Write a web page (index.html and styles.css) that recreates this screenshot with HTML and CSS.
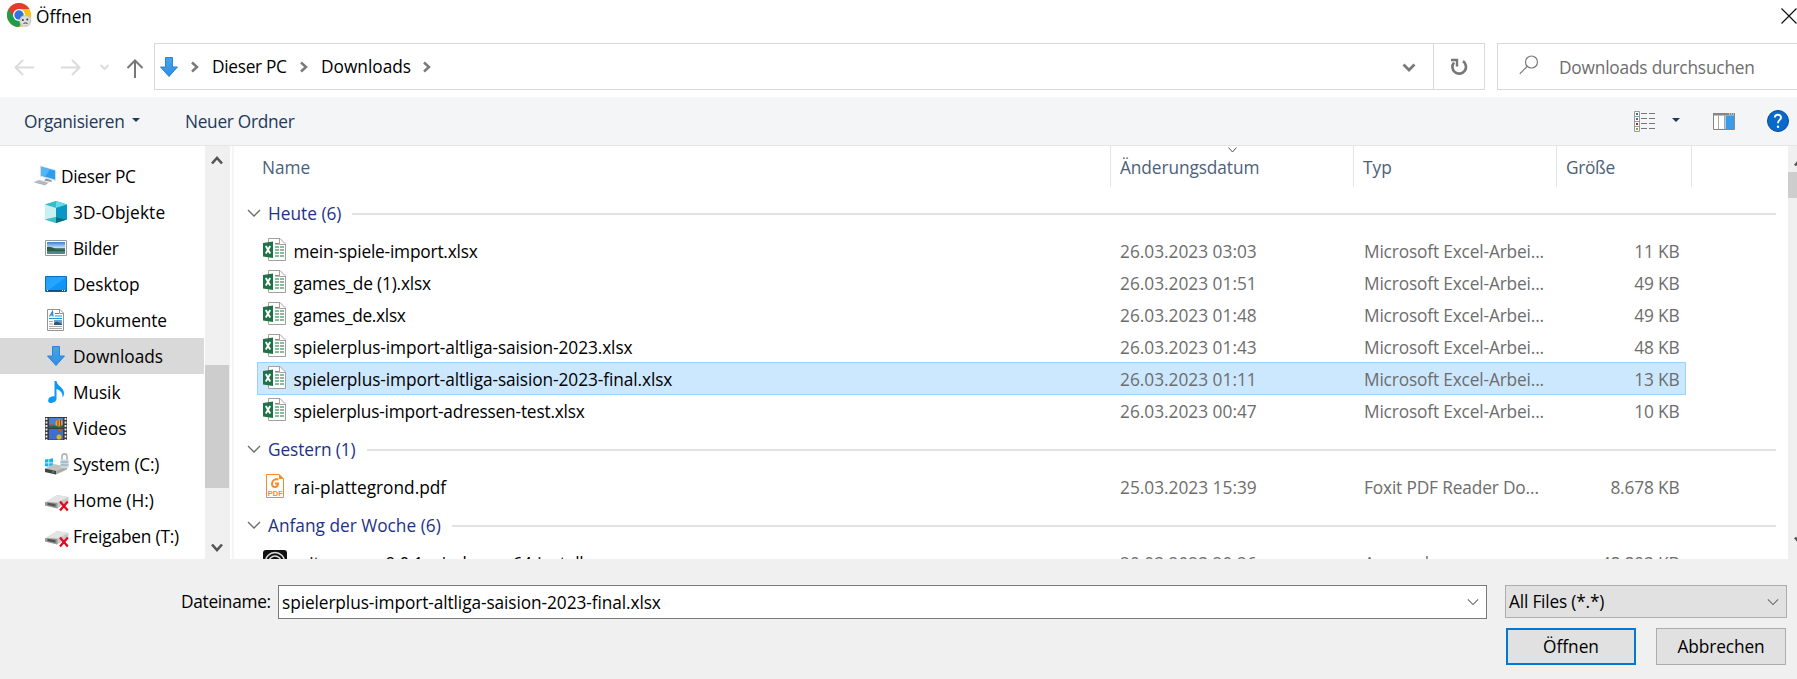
FILE: index.html
```html
<!DOCTYPE html>
<html lang="de">
<head>
<meta charset="utf-8">
<title>Öffnen</title>
<link rel="stylesheet" href="styles.css">
</head>
<body>
<svg class="defs" aria-hidden="true">
  <defs>
    <linearGradient id="blue" x1="0" y1="0" x2="0" y2="1"><stop offset="0" stop-color="#4aa3ea"/><stop offset="1" stop-color="#2e8fe4"/></linearGradient>
    <linearGradient id="desk" x1="0" y1="0" x2="1" y2="1"><stop offset="0" stop-color="#1ba0fb"/><stop offset=".5" stop-color="#2aa5fc"/><stop offset=".52" stop-color="#0f98f8"/><stop offset="1" stop-color="#0a93f5"/></linearGradient>
    <linearGradient id="sky" x1="0" y1="0" x2="0" y2="1"><stop offset="0" stop-color="#3f7fd6"/><stop offset=".5" stop-color="#cfe4f5"/><stop offset=".55" stop-color="#3b6a63"/><stop offset="1" stop-color="#4f8fa8"/></linearGradient>
  </defs>
  <symbol id="excel" viewBox="0 0 24 24">
    <path d="M5.5 .5H17l5.500 5.500V22.500H5.500Z" fill="#fff" stroke="#a0a0a0"/>
    <path d="M16.500 .5V6.500H22.500" fill="none" stroke="#a0a0a0"/>
    <path d="M12 5h4v1.500h-4zM12 8h4v2h-4zM17 8h4v2h-4zM12 11h4v2h-4zM17 11h4v2h-4zM12 14h4v2h-4zM17 14h4v2h-4zM12 17h4v2h-4zM17 17h4v2h-4z" fill="#85bd9f"/>
    <path d="M12 5h4v1.200h-4z" fill="#888"/>
    <path d="M0 5 10 3.500V20L0 18.500Z" fill="#1f7246"/>
    <path d="M2.800 8 7.200 15.500M7.200 8 2.800 15.500" stroke="#fff" stroke-width="1.900"/>
  </symbol>
  <symbol id="down" viewBox="0 0 20 22"><path d="M6.500 1.500h7v9.500h5L10 20.500 1.500 11h5z" fill="url(#blue)" stroke="#2b84d4" stroke-width="1"/></symbol>
  <symbol id="drive" viewBox="0 0 24 20">
    <path d="M0 10.500 12 3 23.500 5v4.500L12 16.500 0 13.500z" fill="#c9c9c9"/>
    <path d="M1 9.500 12 3 23 5 12.500 10.500z" fill="#e4e4e4"/>
    <path d="M0 10 12.500 11V16.500L0 13.500z" fill="#9a9a9a"/>
    <path d="M2.500 10.800 10.500 12V14.800L2.500 13z" fill="#555"/>
    <path d="M15 9.500 22.800 18.500M22.800 9.500 15 18.500" stroke="#e00b1c" stroke-width="2.300"/>
  </symbol>
  <symbol id="chev" viewBox="0 0 14 8"><path d="M1 1 7 7 13 1" fill="none" stroke="#6a6a6a" stroke-width="1.300"/></symbol>
</svg>

<div class="dialog">
  <header class="title">
    <svg width="25" height="25" viewBox="0 0 25 25">
      <circle cx="12" cy="12" r="12" fill="#fbc116"/>
      <path d="M12 12 1.600 6A12 12 0 0 0 12 24L17 15Z" fill="#1f9d49"/>
      <path d="M12 6H22.400A12 12 0 0 0 1.600 6L7 14.500Z" fill="#e33b2e"/>
      <circle cx="12" cy="12" r="6" fill="#fff"/><circle cx="12" cy="12" r="4.700" fill="#2f74e0"/>
      <circle cx="18.300" cy="18" r="6" fill="#c9c9c9"/><circle cx="18.300" cy="18" r="4.800" fill="#dedede"/>
      <circle cx="15.800" cy="17" r="1" fill="#333"/><circle cx="20.300" cy="16.500" r="1" fill="#333"/><path d="M16.500 20.500Q18.500 19 20.500 20.500" fill="none" stroke="#333"/>
    </svg>
    <span class="t">Öffnen</span>
    <svg class="close" width="16" height="16" viewBox="0 0 16 16"><path d="M.5 .5 15.500 15.500M15.500 .5 .5 15.500" stroke="#111" stroke-width="1.200"/></svg>
  </header>

  <nav class="nav">
    <svg class="arrows" width="154" height="47" viewBox="0 0 154 47" fill="none">
      <g stroke="#dcdcdc" stroke-width="2"><path d="M34 24.500H16M23 17 15.500 24.500 23 32M61 24.500H79M72 17 79.500 24.500 72 32"/><path d="M100.500 22 104.500 26 108.500 22"/></g>
      <path d="M135 35V18M127.500 25 135 17.500 142.500 25" stroke="#777" stroke-width="2"/>
    </svg>
    <div class="address">
      <svg class="adown" width="20" height="22"><use href="#down"/></svg>
      <svg class="sep" width="8" height="12" viewBox="0 0 8 12"><path d="M1 1.500 6 6 1 10.500" fill="none" stroke="#7a7a7a" stroke-width="2.500"/></svg>
      <span class="t pc l3">Dieser PC</span>
      <svg class="sep" width="8" height="12" viewBox="0 0 8 12"><path d="M1 1.500 6 6 1 10.500" fill="none" stroke="#7a7a7a" stroke-width="2.500"/></svg>
      <span class="t dl">Downloads</span>
      <svg class="sep" width="8" height="12" viewBox="0 0 8 12"><path d="M1 1.500 6 6 1 10.500" fill="none" stroke="#7a7a7a" stroke-width="2.500"/></svg>
      <svg class="drop" width="14" height="10" viewBox="0 0 14 10"><path d="M1.500 1.500 7 7 12.500 1.500" fill="none" stroke="#7a7a7a" stroke-width="2.800"/></svg>
      <div class="refresh"><svg width="18" height="18" viewBox="0 0 18 18"><path d="M13 3.200A6.800 6.800 0 1 1 4 4.500" fill="none" stroke="#777" stroke-width="2.700"/><path d="M1 2H7V8.500" fill="none" stroke="#777" stroke-width="2.400"/></svg></div>
    </div>
    <div class="search">
      <svg width="20" height="20" viewBox="0 0 20 20" fill="none" stroke="#777" stroke-width="1.200"><circle cx="12.500" cy="7" r="6"/><path d="M8 11.500 .8 18.800"/></svg>
      <span class="t l2">Downloads durchsuchen</span>
    </div>
  </nav>

  <div class="toolbar">
    <span class="t org l3">Organisieren</span><i class="tri"></i><span class="t new l3">Neuer Ordner</span>
    <svg class="view" width="22" height="21" viewBox="0 0 22 21">
      <path d="M.5 .5h5v20h-5zM.5 5.500h5M.5 10.500h5M.5 15.500h5" fill="#fff" stroke="#999"/>
      <path d="M7 2.500h6M15 2.500h6M7 7.500h6M15 7.500h6M7 12.500h6M15 12.500h6M7 17.500h6M15 17.500h6" stroke="#777"/>
      <path d="M2 2h2v2H2z" fill="#3b6e8f"/><path d="M2 7h2v2H2z" fill="#4a67a8"/><path d="M2 12h2v2H2z" fill="#b51e1e"/><path d="M2 17h2v2H2z" fill="#7aa05a"/>
    </svg>
    <i class="tri two"></i>
    <svg class="pane" width="22" height="17" viewBox="0 0 22 17"><path d="M.5 .5h21v16H.5z" fill="#fff" stroke="#868686"/><path d="M0 0h22v2.500H0z" fill="#868686"/><path d="M5.500 2v14M11.500 2v14" stroke="#aaa"/><path d="M12.500 2.500H21V16h-8.500z" fill="#3c9be6"/><path d="M16 1h1M18 1h1M20 1h1" stroke="#fff"/></svg>
    <svg class="help" width="22" height="22" viewBox="0 0 22 22"><circle cx="11" cy="11" r="10.500" fill="#0a69cc" stroke="#0b4a94"/><path d="M7.800 7.500C8 3.800 14.200 4 14 7.600 13.900 10 11 10 11 13.300" fill="none" stroke="#fff" stroke-width="1.900"/><circle cx="11" cy="16.700" r="1.200" fill="#fff"/></svg>
  </div>

  <main class="body">
    <aside class="side">
      <div class="item root"><svg width="24" height="22" viewBox="0 0 24 22"><path d="M7 .5 23 5V16L7 11.500z" fill="#d5dde4"/><path d="M8 1.800 22 5.600V14.500L8 10.600z" fill="#2b9df0"/><path d="M8 1.800 17 4.300 12 11.700 8 10.600z" fill="#55b4f6"/><path d="M13 13.500 18 15 19 17 11 15.500z" fill="#8b959e"/><path d="M.5 17 6 14.800 16 17.500 12 20.500z" fill="#c4cad0"/><path d="M2 17.200 12.500 19.700M4.500 16.200 14 18.500" stroke="#9aa3aa" stroke-width=".7"/></svg><span class="t l3">Dieser PC</span></div>
      <div class="item"><svg width="22" height="22" viewBox="0 0 22 22"><path d="M0 3.500 11 0 22 3.500V18.500L11 22 0 18.500z" fill="#3fd0dc"/><path d="M0 3.500 11 0 22 3.500 11 7z" fill="#37bcc8"/><path d="M11 0 22 3.500 11 7z" fill="#64dbe4"/><path d="M0 3.500 11 7V16L0 18.500z" fill="#c9f1f2"/><path d="M11 7 22 3.500V18.500L11 16z" fill="#0798c6"/><path d="M0 18.500 11 16V22z" fill="#3cc1cb"/><path d="M11 16 22 18.500 11 22z" fill="#04707f"/></svg><span class="t w1">3D-Objekte</span></div>
      <div class="item"><svg width="22" height="16" viewBox="0 0 22 16"><path d="M.5 .5h21v15H.5z" fill="#fff" stroke="#9a9a9a"/><path d="M2 2h18v12H2z" fill="url(#sky)"/><path d="M2 7Q7 6 11 9.500L20 10V11H2z" fill="#2e5b46"/></svg><span class="t l3">Bilder</span></div>
      <div class="item"><svg width="22" height="16" viewBox="0 0 22 16"><path d="M.5 .5h21v15H.5z" fill="url(#desk)" stroke="#0b6fc0"/><path d="M1 14h20v1.500H1z" fill="#0d4f8c"/><path d="M2 14.500h1M17 14.500h1M19 14.500h1" stroke="#fff"/></svg><span class="t">Desktop</span></div>
      <div class="item"><svg width="22" height="22" viewBox="0 0 22 22"><path d="M2.500 .5H15L18.500 4V21.500h-16z" fill="#fff" stroke="#949494"/><path d="M14.500 .5V4.500H18.500" fill="none" stroke="#949494"/><path d="M4.500 7.500 7.500 2.500 8 7.500M5.500 6h2.500" fill="none" stroke="#1b87c9" stroke-width="1.200"/><path d="M10 4.500h4M10 7h7M4 9.500h13" stroke="#2795d8" stroke-width="1.200"/><path d="M4 12.500h4M4 15h4M4 17.500h13M4 19.500h13" stroke="#aaa"/><path d="M9 11h8v5H9z" fill="#6ba0cf"/><path d="M9 14 12 12.500 17 15V16H9z" fill="#2e5673"/></svg><span class="t l1">Dokumente</span></div>
      <div class="item on"><svg width="22" height="22"><use href="#down"/></svg><span class="t">Downloads</span></div>
      <div class="item"><svg width="22" height="22" viewBox="0 0 22 22"><path d="M9.500 0H11.500C12 5 19 6 19 12.500Q19 15 17.500 16.500 18 10 11.500 8V17.500C11.500 21 7.500 22 5.500 22S2.500 20 3.500 18 7 15 9.500 15.500z" fill="#0d99f5"/></svg><span class="t l1">Musik</span></div>
      <div class="item"><svg width="22" height="23" viewBox="0 0 22 23"><path d="M0 0h22v23H0z" fill="#3c3c3c"/><path d="M1.500 1v22M20.500 1v22" stroke="#eee" stroke-width="1.800" stroke-dasharray="2 1.500"/><path d="M4 1h14v10H4z" fill="#4c80d4"/><path d="M4 12h14v10.500H4z" fill="#3d70ca"/><path d="M4 8.500Q7 6.500 10 9L18 8V11H4z" fill="#286443"/><circle cx="14" cy="6" r="3.500" fill="#d8aa25"/><path d="M12.500 3h1v6h-1zM15 3h1v6h-1z" fill="#b52b2b"/><path d="M13 12h4l-1.500 3h-2z" fill="#b85a23"/><circle cx="14" cy="20" r="2.500" fill="#e2b123"/><circle cx="6.500" cy="8" r="1.300" fill="#d83d66"/></svg><span class="t">Videos</span></div>
      <div class="item"><svg width="24" height="22" viewBox="0 0 24 22"><path d="M0 6.500 3.500 6V9.500H0zM4.200 5.900 8 5.300V9.500H4.200zM0 10.200H3.500V13.600L0 13.200zM4.200 10.200H8V14.200L4.200 13.700z" fill="#12b5ee"/><path d="M0 15.500 9 11 22 14 11 18.500V21.500L0 19z" fill="#c2c2c2"/><path d="M11 18 22 13.500V16.500L11 21.500z" fill="#aaa"/><path d="M0 15.500 11 18V21.500L0 19z" fill="#444"/><path d="M7 19h2" stroke="#35d435"/><path d="M17 7V3.500C17 0 22 0 22 3.500V7" fill="none" stroke="#aab4bb" stroke-width="1.600"/><path d="M15.500 6.500h8v8l-4 1-4-1z" fill="#cdd9e1"/><path d="M15.500 9h8M15.500 12h8" stroke="#86a2b3"/></svg><span class="t l2">System (C:)</span></div>
      <div class="item net"><svg width="24" height="20"><use href="#drive"/></svg><span class="t">Home (H:)</span></div>
      <div class="item net"><svg width="24" height="20"><use href="#drive"/></svg><span class="t l2">Freigaben (T:)</span></div>
    </aside>
    <div class="sbar">
      <svg width="12" height="9" viewBox="0 0 12 9"><path d="M1 7.500 6 2 11 7.500" fill="none" stroke="#555" stroke-width="2.600"/></svg>
      <div class="thumb"></div>
      <svg width="12" height="9" viewBox="0 0 12 9"><path d="M1 1.500 6 7 11 1.500" fill="none" stroke="#555" stroke-width="2.600"/></svg>
    </div>
    <section class="files">
      <div class="cols">
        <span class="t">Name</span><span class="t l1">Änderungsdatum<svg class="sort" width="9" height="6" viewBox="0 0 9 6"><path d="M.5 .5 4.500 5 8.500 .5" fill="none" stroke="#555"/></svg></span><span class="t">Typ</span><span class="t l3">Größe</span><span></span>
      </div>
      <div class="group"><svg width="14" height="8"><use href="#chev"/></svg><span class="t">Heute (6)</span><hr></div>
      <div class="row"><svg width="24" height="24"><use href="#excel"/></svg><span class="t n l2">mein-spiele-import.xlsx</span><span class="t d">26.03.2023 03:03</span><span class="t k">Microsoft Excel-Arbei...</span><span class="t s">11 KB</span></div>
      <div class="row"><svg width="24" height="24"><use href="#excel"/></svg><span class="t n l2">games_de (1).xlsx</span><span class="t d">26.03.2023 01:51</span><span class="t k">Microsoft Excel-Arbei...</span><span class="t s">49 KB</span></div>
      <div class="row"><svg width="24" height="24"><use href="#excel"/></svg><span class="t n l3">games_de.xlsx</span><span class="t d">26.03.2023 01:48</span><span class="t k">Microsoft Excel-Arbei...</span><span class="t s">49 KB</span></div>
      <div class="row"><svg width="24" height="24"><use href="#excel"/></svg><span class="t n l1">spielerplus-import-altliga-saision-2023.xlsx</span><span class="t d">26.03.2023 01:43</span><span class="t k">Microsoft Excel-Arbei...</span><span class="t s">48 KB</span></div>
      <div class="row sel"><svg width="24" height="24"><use href="#excel"/></svg><span class="t n l1">spielerplus-import-altliga-saision-2023-final.xlsx</span><span class="t d">26.03.2023 01:11</span><span class="t k">Microsoft Excel-Arbei...</span><span class="t s">13 KB</span></div>
      <div class="row"><svg width="24" height="24"><use href="#excel"/></svg><span class="t n l2">spielerplus-import-adressen-test.xlsx</span><span class="t d">26.03.2023 00:47</span><span class="t k">Microsoft Excel-Arbei...</span><span class="t s">10 KB</span></div>
      <div class="group"><svg width="14" height="8"><use href="#chev"/></svg><span class="t l1">Gestern (1)</span><hr></div>
      <div class="row"><svg width="24" height="24" viewBox="0 0 24 24"><path d="M3.500 .5H16L20.500 5V23.500h-17z" fill="#fff" stroke="#f28c28"/><path d="M16 0 21 5H16z" fill="#f28c28"/><path d="M15.500 5.500Q9.500 4.500 9 9.500 9 13.500 12.500 13 15 12.500 15 9.500H12" fill="none" stroke="#f28c28" stroke-width="2"/><text class="pdf" x="4.800" y="21.800">PDF</text></svg><span class="t n">rai-plattegrond.pdf</span><span class="t d">25.03.2023 15:39</span><span class="t k">Foxit PDF Reader Do...</span><span class="t s">8.678 KB</span></div>
      <div class="group"><svg width="14" height="8"><use href="#chev"/></svg><span class="t">Anfang der Woche (6)</span><hr></div>
      <div class="row"><svg width="24" height="24" viewBox="0 0 24 24"><rect width="24" height="24" rx="3" fill="#111"/><circle cx="12" cy="12" r="9.500" fill="none" stroke="#ddd" stroke-width="1.500"/><circle cx="12" cy="12" r="6" fill="none" stroke="#ddd" stroke-width="1.500"/></svg><span class="t n l2">mitmproxy-9.0.1-windows-x64-install</span><span class="t d">20.03.2023 20:26</span><span class="t k">Anwendung</span><span class="t s">48.893 KB</span></div>
    </section>
    <div class="rbar"><svg width="12" height="9" viewBox="0 0 12 9"><path d="M1 7.500 6 2 11 7.500" fill="none" stroke="#555" stroke-width="2.600"/></svg><div class="thumb"></div><svg width="12" height="9" viewBox="0 0 12 9"><path d="M1 1.500 6 7 11 1.500" fill="none" stroke="#555" stroke-width="2.600"/></svg></div>
  </main>

  <footer class="foot">
    <div class="line">
      <span class="t label l3">Dateiname:</span>
      <div class="input"><span class="t l1">spielerplus-import-altliga-saision-2023-final.xlsx</span><svg width="12" height="8" viewBox="0 0 14 8"><use href="#chev"/></svg></div>
      <div class="select"><span class="t l2">All Files (*.*)</span><svg width="12" height="8" viewBox="0 0 14 8"><use href="#chev"/></svg></div>
    </div>
    <div class="buttons"><button class="primary"><span class="t">Öffnen</span></button><button><span class="t l1">Abbrechen</span></button></div>
  </footer>
</div>
</body>
</html>
```
FILE: styles.css
```css
* { box-sizing: border-box; }
html { overflow: hidden; }
body { margin: 0; width: 1797px; height: 679px; overflow: hidden; background: #fff; color: #000; font: 17.3px/24px "Open Sans", "Noto Sans", sans-serif; }
.defs { position: absolute; width: 0; height: 0; }
svg { flex: none; display: block; }
.t { white-space: nowrap; }
.w1 { letter-spacing: .12px; }
.l1 { letter-spacing: -.09px; }
.l2 { letter-spacing: -.19px; }
.l3 { letter-spacing: -.3px; }
.dialog { width: 1797px; height: 679px; display: flex; flex-direction: column; overflow: hidden; }
.title { height: 43px; flex: none; display: flex; align-items: flex-start; padding: 3px 0 0 7px; }
.title .t { margin: 2px 0 0 4px; }
.close { margin: 5px 0 0 auto; }
.nav { height: 54px; flex: none; display: flex; align-items: flex-start; }
.address { width: 1331px; height: 47px; flex: none; border: 1px solid #d9d9d9; display: flex; align-items: center; }
.adown { margin: 0 12px 0 4px; }
.sep { margin-right: 13px; }
.sep + .t { padding-top: 1px; }
.pc { width: 76px; margin-right: 12px; }
.dl { width: 90px; margin-right: 12px; }
.drop { margin: 2px 17px 0 auto; }
.refresh { width: 51px; height: 45px; border-left: 1px solid #d9d9d9; display: grid; place-items: center; }
.search { width: 310px; height: 47px; flex: none; margin-left: 12px; border: 1px solid #d9d9d9; padding-left: 21px; display: flex; align-items: center; gap: 20px; color: #6d6d6d; }
.search .t { padding-top: 2px; }
.search svg { margin-top: -3px; }
.toolbar { height: 49px; flex: none; background: #f4f5f7; border-bottom: 1px solid #e5e5e5; display: flex; align-items: center; padding-left: 24px; color: #1e395b; }
.toolbar .t { padding-top: 2px; }
.org { width: 101px; }
.tri { width: 0; height: 0; margin: -3px 0 0 7px; border: 4px solid transparent; border-top-color: #1e395b; border-bottom: 0; }
.new { margin-left: 45px; width: 120px; }
.view { margin-left: auto; }
.two { margin-left: 16px; }
.pane { margin: 0 0 0 33px; }
.help { margin: 0 8px 0 32px; }
.body { height: 413px; flex: none; display: flex; overflow: hidden; }
.side { width: 205px; padding-top: 12px; }
.item { height: 36px; width: 204px; display: flex; align-items: center; padding-left: 45px; }
.item .t { padding-top: 1px; }
.item svg { margin-right: 6px; }
.item svg[width="24"] { margin-right: 4px; }
.item.net svg { margin-top: 3px; }
.item.root { padding-left: 33px; }
.item.on { background: #d9d9d9; }
.sbar { width: 25px; background: #f0f0f0; display: flex; flex-direction: column; justify-content: space-between; align-items: flex-start; padding: 10px 0 7px; }
.sbar svg { margin-left: 6px; }
.sbar .thumb { width: 24px; height: 123px; background: #cdcdcd; margin-top: 145px; }
.files { width: 1556px; margin-left: 2px; border-left: 2px solid #f5f5f5; }
.cols { height: 44px; display: grid; grid-template-columns: 877px 243px 203px 135px 1fr; color: #4c607a; }
.cols span { height: 41px; padding: 10px 0 0 9px; border-right: 1px solid #e5e5e5; position: relative; }
.cols span:first-child { padding-left: 28px; }
.cols span:last-child { border: 0; }
.sort { position: absolute; left: 117px; top: 1px; }
.group { height: 44px; padding: 4px 10px 0 13px; display: flex; align-items: center; color: #1e3287; }
.group svg { margin: -3px 7px 0 0; }
.group hr { flex: 1; height: 2px; border: 0; background: #e2e2e2; margin: -1px 2px 0 11px; }
.row { width: 1429px; height: 32px; margin-left: 23px; padding: 1px 0 0 6px; display: grid; grid-template-columns: 30.500px 826.500px 244px 192px 123.500px; align-items: center; }
.row .t { padding-top: 2px; }
.row svg { margin-top: -1px; }
.sel { height: 33px; margin-bottom: -1px; padding: 0 0 0 5px; background: #cce8ff; border: 1px solid #99d1ff; }
.d, .k, .s { color: #6d6d6d; }
.k, .s { letter-spacing: -.15px; }
.s { text-align: right; }
.pdf { font: 700 7.500px "Liberation Sans", sans-serif; fill: #f28c28; }
.rbar { width: 9px; background: #f0f0f0; overflow: hidden; position: relative; }
.rbar svg { margin: 12px 0 0 6px; }
.rbar .thumb { height: 26px; background: #cdcdcd; margin: 5px 0 338px; }
.foot { flex: 1; min-height: 0; background: #f0f0f0; padding-top: 26px; }
.line { display: flex; height: 34px; }
.label { margin: 5px 0 0 181px; width: 97px; }
.input { width: 1209px; border: 1px solid #7a7a7a; background: #fff; display: flex; justify-content: space-between; align-items: center; padding: 0 7px 0 3px; }
.input .t, .select .t { padding-top: 1px; }
.select { width: 282px; height: 33px; margin-left: 18px; border: 1px solid #adadad; background: #e1e1e1; display: flex; justify-content: space-between; align-items: center; padding: 0 7px 0 3px; }
.buttons { display: flex; gap: 20px; margin: 9px 0 0 1506px; }
button { width: 130px; height: 37px; padding: 1px 0 0; border: 1px solid #adadad; background: #e1e1e1; color: #000; font: inherit; }
.primary { border: 2px solid #0078d7; }
```
